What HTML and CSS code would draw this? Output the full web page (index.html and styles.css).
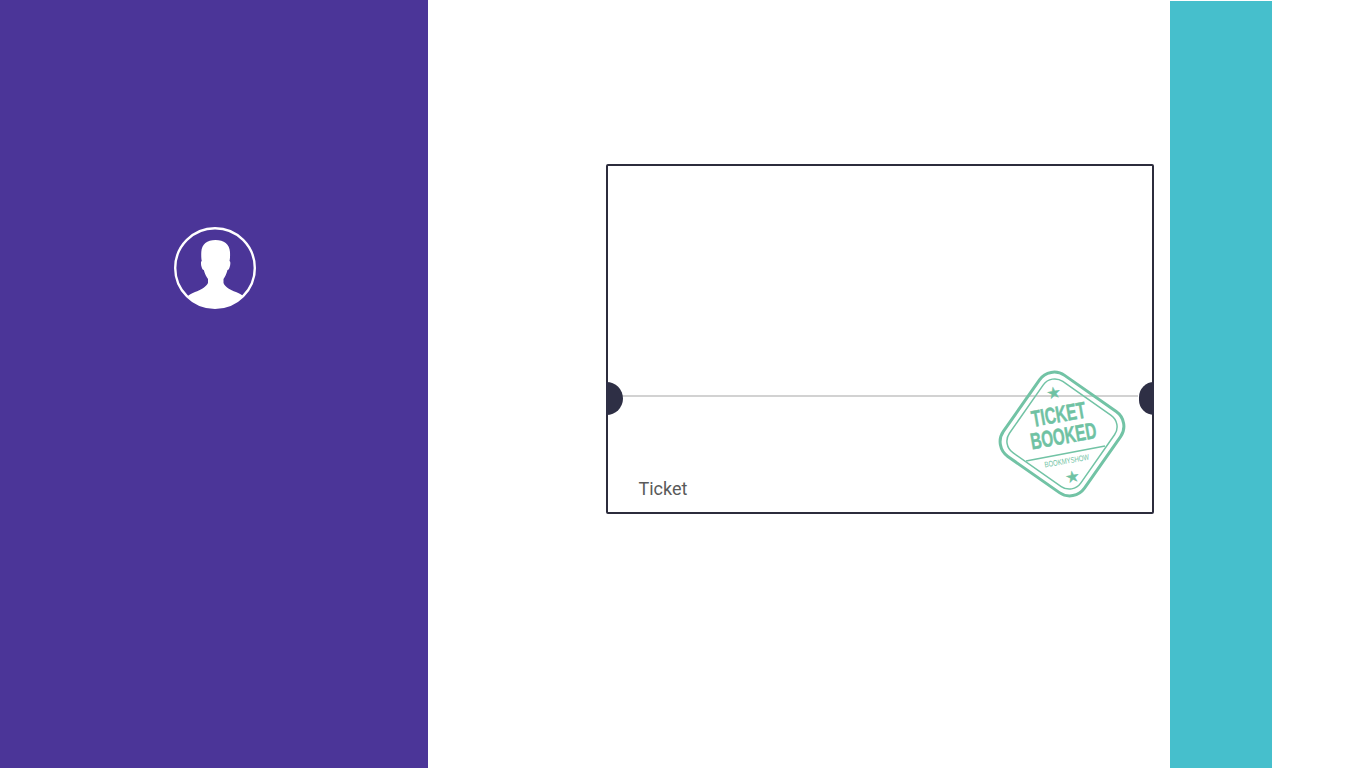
FILE: index.html
```html
<!DOCTYPE html>
<html lang="en">
<head>
<meta charset="utf-8">
<title>Ticket</title>
<link rel="stylesheet" href="styles.css">
</head>
<body>
<div class="page">
  <aside class="sidebar">
    <svg class="avatar" viewBox="0 0 82 82" width="82" height="82">
      <defs><clipPath id="avatar-clip"><circle cx="41" cy="41" r="39.500"/></clipPath></defs>
      <circle cx="41" cy="41" r="39.800" fill="none" stroke="#fff" stroke-width="2.400"/>
      <path clip-path="url(#avatar-clip)" fill="#fff" d="M41.500 13C33 13 27.800 17 27.300 25C27.100 29 27.300 32 27.800 34C26.600 34 26.800 38 27.600 40C28.100 42 28.800 43 29.800 43C30.800 47 32.500 50 34 52L34 56C32 60 27 63 21 65C17 66.500 14.500 68 12 71L12 84H71V71C68.500 68 66 66.500 62 65C56 63 51 60 49.500 56L49.500 52C51 50 52.500 47 53.500 43C54.500 43 55.200 42 55.700 40C56.500 38 56.700 34 55.500 34C56 32 56.200 29 56 25C55.500 17 50 13 41.500 13Z"/>
    </svg>
  </aside>
  <main class="content">
    <section class="ticket">
      <span class="notch notch-left"></span>
      <span class="notch notch-right"></span>
      <div class="ticket-top"></div>
      <div class="ticket-bottom"><span class="ticket-label">Ticket</span></div>
      <svg class="stamp" viewBox="0 0 130 130" width="130" height="130">
        <g transform="rotate(35 65 65)" fill="none" stroke="#72c3a5">
          <rect x="15.500" y="15.500" width="99" height="99" rx="18" stroke-width="3"/>
          <rect x="21.500" y="21.500" width="87" height="87" rx="14" stroke-width="1.500"/>
        </g>
        <g transform="rotate(-10 65 65)" fill="#6fc2a3" stroke="#6fc2a3" stroke-width="0.500" text-anchor="middle">
          <text class="stamp-star" x="64" y="28">★</text>
          <text class="stamp-big" transform="translate(65 53) scale(0.66 1)">TICKET</text>
          <text class="stamp-big" transform="translate(66 75) scale(0.66 1)">BOOKED</text>
          <text class="stamp-small" transform="translate(65 95) scale(0.75 1)">BOOKMYSHOW</text>
          <text class="stamp-star" x="68" y="114">★</text>
        </g>
        <line x1="29" y1="92" x2="108" y2="77" stroke="#72c3a5" stroke-width="1.500"/>
      </svg>
    </section>
  </main>
  <aside class="rail"></aside>
</div>
</body>
</html>
```
FILE: styles.css
```css
html, body {
  margin: 0;
  height: 100%;
  background: #fff;
  overflow: hidden;
}
.page {
  display: flex;
  height: 768px;
  width: 1366px;
}
.sidebar {
  flex: 0 0 428px;
  background: #4b3598;
  display: flex;
  justify-content: center;
  align-items: flex-start;
  padding-top: 227px;
  box-sizing: border-box;
}
.avatar {
  display: block;
  margin-left: 1px;
}
.content {
  flex: 0 0 742px;
  padding: 164px 0 0 178px;
  box-sizing: border-box;
}
.ticket {
  position: relative;
  box-sizing: border-box;
  width: 548px;
  height: 350px;
  border: 2px solid #2c2c3c;
  border-radius: 2px;
  display: flex;
  flex-direction: column;
  font-family: Roboto, sans-serif;
}
.ticket-top {
  height: 229px;
  border-bottom: 2px solid #d2d2d2;
  margin: 0 14px;
}
.ticket-bottom {
  flex: 1;
  display: flex;
  align-items: flex-end;
  padding: 0 0 13px 30.500px;
}
.ticket-label {
  font-size: 18px;
  line-height: 21px;
  color: #5a5a5a;
}
.notch {
  position: absolute;
  top: 216px;
  height: 33px;
  background: #2e2f45;
}
.notch-left {
  left: -2px;
  width: 16.500px;
  border-radius: 0 17px 17px 0;
}
.notch-right {
  right: -2px;
  width: 15.500px;
  border-radius: 17px 0 0 17px;
}
.stamp {
  position: absolute;
  left: 389px;
  top: 203px;
}
.stamp-big {
  font-family: "Liberation Sans", sans-serif;
  font-weight: 700;
  font-size: 23px;
}
.stamp-small {
  font-family: "Liberation Sans", sans-serif;
  font-size: 8px;
  stroke-width: 0;
}
.stamp-star {
  font-family: "DejaVu Sans", sans-serif;
  font-size: 15px;
}
.rail {
  flex: 0 0 102px;
  background: #46bfcc;
  margin-top: 1px;
}
```
